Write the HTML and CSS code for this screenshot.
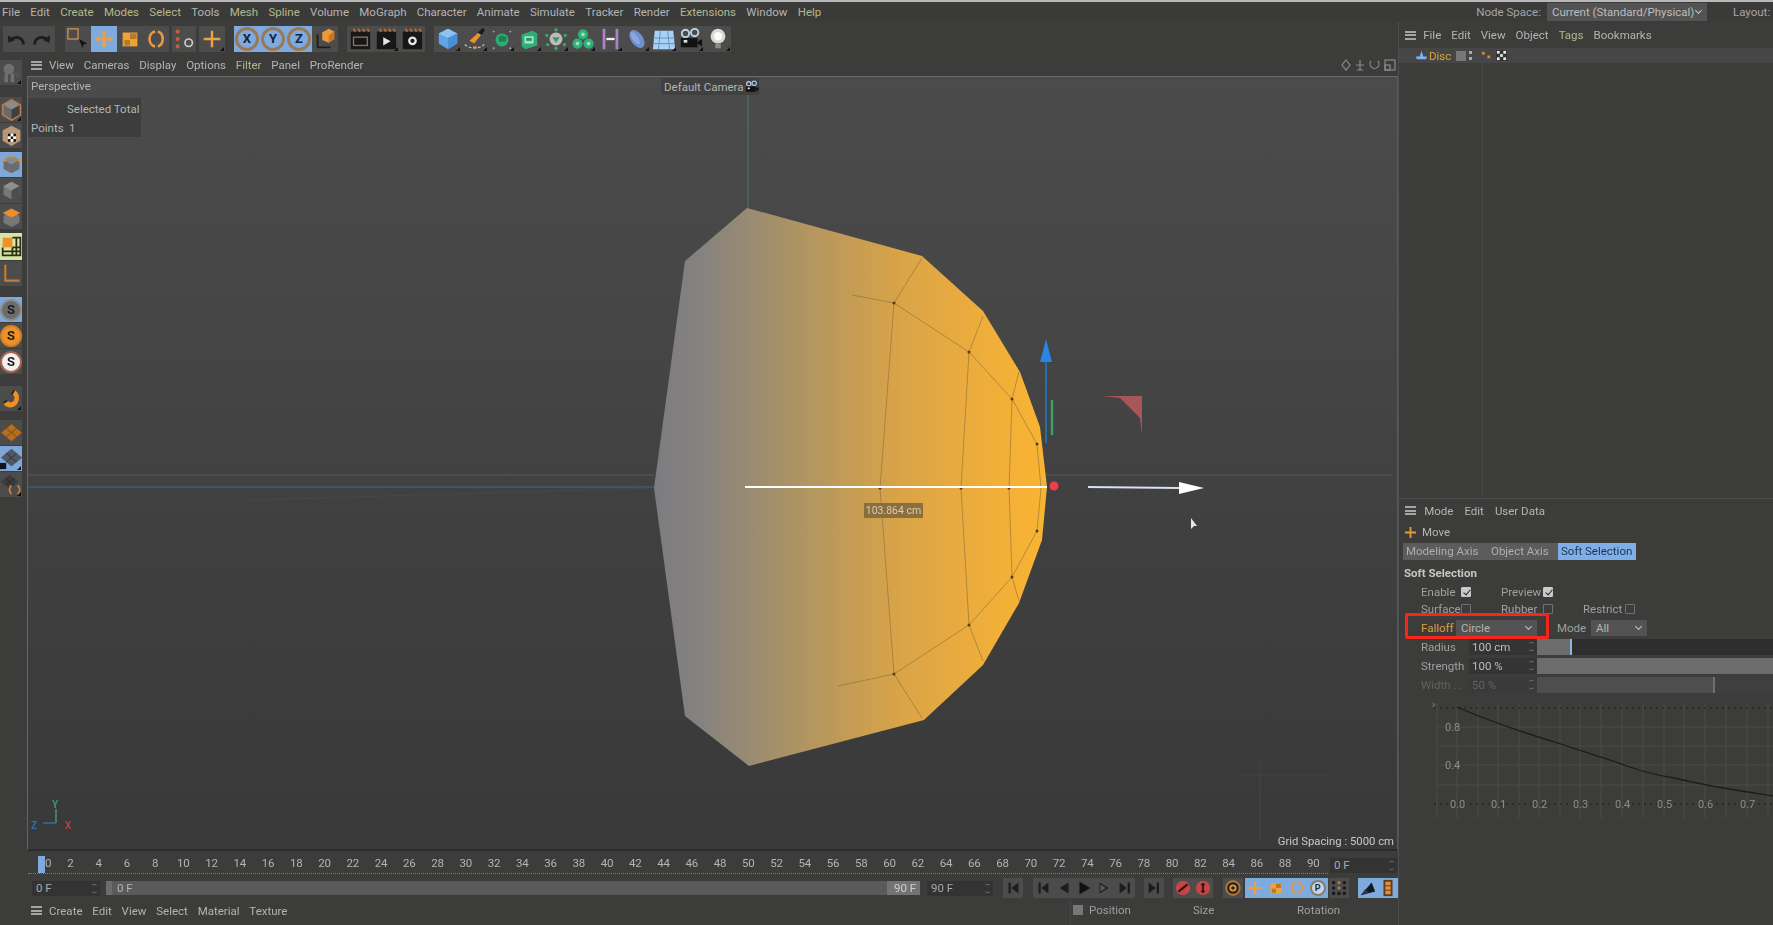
FILE: index.html
```html
<!DOCTYPE html>
<html lang="en">
<head>
<meta charset="utf-8">
<title>Cinema 4D</title>
<link rel="stylesheet" href="styles.css">
</head>
<body>
<svg class="sprite" xmlns="http://www.w3.org/2000/svg">
  <symbol id="i-undo" viewBox="0 0 26 26"><path d="M21 19c0-6-6-10-13-6" fill="none" stroke="#1d1d1d" stroke-width="3"/><path d="M4 9l1 8 7-3z" fill="#1d1d1d"/></symbol>
  <symbol id="i-redo" viewBox="0 0 26 26"><path d="M5 19c0-6 6-10 13-6" fill="none" stroke="#1d1d1d" stroke-width="3"/><path d="M22 9l-1 8-7-3z" fill="#1d1d1d"/></symbol>
  <symbol id="i-rect" viewBox="0 0 26 26"><rect x="2" y="2" width="11" height="11" fill="none" stroke="#c08a4e" stroke-width="1.6"/><path d="M14 13l9 5-4 1-1 4z" fill="#151515"/></symbol>
  <symbol id="i-move" viewBox="0 0 26 26"><path d="M13 3l3.500 4h-2v4.500h4.500v-2l4 3.500-4 3.500v-2h-4.500v4.500h2l-3.500 4-3.500-4h2v-4.500h-4.500v2l-4-3.500 4-3.500v2h4.500v-4.500h-2z" fill="#e8a04c"/></symbol>
  <symbol id="i-scale" viewBox="0 0 26 26"><path d="M5 6h16v15H5z" fill="#f0a232"/><path d="M13 7h7v6h-7zM7 14h6v6H7z" fill="#7d5a2b" opacity=".55"/></symbol>
  <symbol id="i-rot" viewBox="0 0 26 26"><path d="M12 5c-8 1-8 15 0 16M15 5c7 2 7 14 0 16" fill="none" stroke="#e59a42" stroke-width="2.800"/></symbol>
  <symbol id="i-psr" viewBox="0 0 26 26"><circle cx="5" cy="5" r="2.200" fill="#c2603a"/><circle cx="5" cy="13" r="2.200" fill="#c2603a"/><circle cx="5" cy="21" r="2.200" fill="#c2603a"/><circle cx="17" cy="17" r="4" fill="none" stroke="#ccc" stroke-width="1.800"/></symbol>
  <symbol id="i-plus" viewBox="0 0 26 26"><path d="M13 4v18M4 13h18" stroke="#eda343" stroke-width="2.600"/></symbol>
  <symbol id="i-coord" viewBox="0 0 26 26"><path d="M5 8v14h14" fill="none" stroke="#1f1f1f" stroke-width="2"/><path d="M10 6l7-4 6 3v8l-6 4-7-3z" fill="#ee9a38"/><path d="M17 9v8l6-4V5z" fill="#c87825"/></symbol>
  <symbol id="i-film" viewBox="0 0 26 26"><rect x="3" y="5" width="21" height="19" fill="#181716"/><path d="M6 2l2 3M11 2l2 3M16 2l2 3M21 2l2 3" stroke="#b8693c" stroke-width="2"/><rect x="6" y="11" width="15" height="9" fill="none" stroke="#777" stroke-width="1.500"/></symbol>
  <symbol id="i-filmp" viewBox="0 0 26 26"><rect x="3" y="5" width="21" height="19" fill="#181716"/><path d="M6 2l2 3M11 2l2 3M16 2l2 3M21 2l2 3" stroke="#b8693c" stroke-width="2"/><path d="M10 11l8 4.500-8 4.500z" fill="#e6e6e6"/></symbol>
  <symbol id="i-filmg" viewBox="0 0 26 26"><rect x="3" y="5" width="21" height="19" fill="#181716"/><path d="M6 2l2 3M11 2l2 3M16 2l2 3M21 2l2 3" stroke="#b8693c" stroke-width="2"/><circle cx="13.500" cy="15" r="3.500" fill="none" stroke="#e4e4e4" stroke-width="2.500"/></symbol>
  <symbol id="i-cube" viewBox="0 0 26 26"><path d="M13 2l10 5v11l-10 6-10-6V7z" fill="#5da4e8"/><path d="M13 2l10 5-10 5-10-5z" fill="#8cc3f2"/><path d="M13 12v12l10-6V7z" fill="#4b8ed4"/></symbol>
  <symbol id="i-pen" viewBox="0 0 26 26"><path d="M7 15L18 5l2 3-8 10z" fill="#e89230"/><path d="M16 6l5-5 3 2-4 6z" fill="#1b1b1b"/><path d="M2 19c5 5 16 5 21 0" fill="none" stroke="#bdbdbd" stroke-width="1.400" stroke-dasharray="3 2"/><path d="M11 22h4" stroke="#e89230" stroke-width="2"/></symbol>
  <symbol id="i-gem" viewBox="0 0 26 26"><circle cx="13" cy="14" r="7" fill="#2fae74"/><path d="M9 11l4-2 5 2-1 5h-7z" fill="#1c8256"/><g fill="#aab"><circle cx="4" cy="5" r="1"/><circle cx="22" cy="5" r="1"/><circle cx="4" cy="23" r="1"/><circle cx="22" cy="23" r="1"/></g></symbol>
  <symbol id="i-box" viewBox="0 0 26 26"><path d="M5 8l12-4 5 3v13l-13 4-4-3z" fill="#30ad77"/><rect x="8" y="10" width="10" height="8" fill="#9ee3c4"/><rect x="10" y="12" width="6" height="3" fill="#2a8f62"/></symbol>
  <symbol id="i-gear" viewBox="0 0 26 26"><circle cx="13" cy="13" r="7" fill="#bcbcb8"/><path d="M9 11h8l-4 6z" fill="#2f9c6c"/><g fill="#39a878"><circle cx="13" cy="3" r="1.800"/><circle cx="13" cy="23" r="1.800"/><circle cx="3" cy="9" r="1.800"/><circle cx="23" cy="9" r="1.800"/><circle cx="4" cy="19" r="1.800"/><circle cx="22" cy="19" r="1.800"/></g></symbol>
  <symbol id="i-tri" viewBox="0 0 26 26"><circle cx="13" cy="8" r="5.500" fill="#2fb27a"/><circle cx="7" cy="18" r="5.500" fill="#2fb27a"/><circle cx="19" cy="18" r="5.500" fill="#2fb27a"/><g fill="#9be0bf"><circle cx="13" cy="8" r="2"/><circle cx="7" cy="18" r="2"/><circle cx="19" cy="18" r="2"/></g></symbol>
  <symbol id="i-h" viewBox="0 0 26 26"><path d="M5 2h3v22H5zM19 2h3v22h-3z" fill="#a783c9"/><path d="M9 13h9" stroke="#eee" stroke-width="2.500"/></symbol>
  <symbol id="i-disc" viewBox="0 0 26 26"><ellipse cx="13" cy="13" rx="6.500" ry="11" transform="rotate(-35 13 13)" fill="#6f8fce"/><ellipse cx="11" cy="12" rx="3" ry="8" transform="rotate(-35 11 12)" fill="#8aa6de"/></symbol>
  <symbol id="i-floor" viewBox="0 0 26 26"><path d="M3 4h20l2 20H1z" fill="#a9d2f4"/><path d="M1 12h24M1 18h24M9 4L7 24M17 4l2 20" stroke="#5c8fc4" stroke-width="1"/></symbol>
  <symbol id="i-cam" viewBox="0 0 26 26"><circle cx="7" cy="7" r="4" fill="none" stroke="#bcd5ec" stroke-width="2"/><circle cx="17" cy="6" r="4" fill="none" stroke="#bcd5ec" stroke-width="2"/><rect x="2" y="12" width="18" height="10" fill="#121212"/><path d="M20 16l5-3v8l-5-3z" fill="#121212"/><rect x="5" y="14" width="4" height="3" fill="#ddd"/></symbol>
  <symbol id="i-bulb" viewBox="0 0 26 26"><circle cx="13" cy="10" r="8" fill="#d9d9d4"/><circle cx="13" cy="10" r="4.500" fill="#fbfbf7"/><rect x="10" y="18" width="6" height="5" fill="#8c8c8c"/></symbol>
  <symbol id="i-cubepts" viewBox="0 0 26 26"><path d="M13 3l9 5v10l-9 5-9-5V8z" fill="#6c6c6c"/><path d="M13 3l9 5-9 5-9-5z" fill="#8a8a8a"/><circle cx="13" cy="4" r="2" fill="#e58a2e"/><circle cx="22" cy="8" r="2" fill="#e58a2e"/><circle cx="5" cy="8" r="2" fill="#e58a2e"/></symbol>
  <symbol id="i-cubeg" viewBox="0 0 26 26"><path d="M13 3l9 5v10l-9 5-9-5V8z" fill="#777"/><path d="M13 3l9 5-9 5-9-5z" fill="#8f8f8f"/><path d="M13 13v10l9-5V8z" fill="#4d4d4d"/></symbol>
  <symbol id="i-cubeo" viewBox="0 0 26 26"><path d="M13 8l9 4v8l-9 5-9-5v-8z" fill="#777"/><path d="M13 4l10 5-10 5L3 9z" fill="#ec8e2a"/></symbol>
  <symbol id="i-hex" viewBox="0 0 26 26"><path d="M13 2l10 6v11l-10 6-10-6V8z" fill="#6a6a6a" stroke="#b5794a" stroke-width="2"/><path d="M13 13v11l9-5V8z" fill="#3f3f3f"/><path d="M13 3l9 5-9 5-9-5z" fill="#8b8b8b"/></symbol>
  <symbol id="i-check" viewBox="0 0 26 26"><path d="M13 2l10 5v12l-10 6-10-6V7z" fill="#b89878"/><g fill="#111"><rect x="9" y="11" width="3" height="3"/><rect x="15" y="11" width="3" height="3"/><rect x="12" y="14" width="3" height="3"/><rect x="9" y="17" width="3" height="3"/><rect x="15" y="17" width="3" height="3"/></g><g fill="#fff"><rect x="12" y="11" width="3" height="3"/><rect x="9" y="14" width="3" height="3"/><rect x="15" y="14" width="3" height="3"/><rect x="12" y="17" width="3" height="3"/></g></symbol>
  <symbol id="i-statue" viewBox="0 0 26 26"><circle cx="10" cy="9" r="6" fill="#7b7b7b"/><rect x="5" y="14" width="4" height="10" fill="#7b7b7b"/><rect x="12" y="14" width="4" height="10" fill="#7b7b7b"/><path d="M16 12l6 3-3 5z" fill="#6e5050"/></symbol>
  <symbol id="i-grid4" viewBox="0 0 26 26"><rect x="1" y="1" width="24" height="24" fill="#d9e3a6"/><rect x="3" y="3" width="11" height="11" fill="#ee9226"/><path d="M14 3h9v20H3v-9M18.500 3v20M3 18.500h20M14 14v9M14 14h9" fill="none" stroke="#2a3016" stroke-width="2"/></symbol>
  <symbol id="i-axis" viewBox="0 0 26 26"><path d="M6 3v18h16" fill="none" stroke="#c77a33" stroke-width="2.400"/></symbol>
  <symbol id="i-magnet" viewBox="0 0 26 26"><path d="M15 3c8 2 9 14 1 19-6 3-11 0-13-5l5-3c2 4 5 4 7 2 3-3 1-8-3-8z" fill="#ee9025"/><path d="M3 17l5-3 1 2-5 3z" fill="#1f1f1f"/><path d="M15 3l-3 5 2 1 3-5z" fill="#1f1f1f"/></symbol>
  <symbol id="i-plane" viewBox="0 0 26 26"><path d="M13 3l12 10-12 10L1 13z" fill="#b36f1f"/><path d="M7 8l12 10M13 3l12 10M19 8L7 18M1 13L13 3" stroke="#6d4518" stroke-width="1"/></symbol>
  <symbol id="i-planeb" viewBox="0 0 26 26"><path d="M13 2l12 10-12 10L1 12z" fill="#505862"/><path d="M7 7l12 10M19 7L7 17" stroke="#2b3037" stroke-width="1"/><rect x="0" y="18" width="7" height="7" fill="#12161c"/></symbol>
  <symbol id="i-planebr" viewBox="0 0 26 26"><path d="M11 2l10 8-10 8L1 10z" fill="#3b3b3b"/><path d="M6 6l10 8M16 6L6 14" stroke="#262626" stroke-width="1"/><path d="M13 14c-3 3-3 7 0 10M20 14c3 3 3 7 0 10" fill="none" stroke="#d4832e" stroke-width="2"/></symbol>
  <symbol id="i-first" viewBox="0 0 20 20"><path d="M5 4h2.500v12H5zM16 4v12L8 10z" fill="#1d1d1d"/></symbol>
  <symbol id="i-prev" viewBox="0 0 20 20"><path d="M15 4v12L5 10z" fill="#1d1d1d"/></symbol>
  <symbol id="i-play" viewBox="0 0 20 20"><path d="M5 3l12 7-12 7z" fill="#111"/></symbol>
  <symbol id="i-next" viewBox="0 0 20 20"><path d="M5 4v12l10-6z" fill="#1d1d1d"/><path d="M6 6l6 4-6 4z" fill="#5a5a5a"/></symbol>
  <symbol id="i-last" viewBox="0 0 20 20"><path d="M13 4h2.500v12H13zM4 4v12l8-6z" fill="#1d1d1d"/></symbol>
  <symbol id="i-rec" viewBox="0 0 20 20"><circle cx="10" cy="10" r="8" fill="#c94545"/><path d="M5 14L15 6" stroke="#2a1616" stroke-width="2.500"/></symbol>
  <symbol id="i-rec2" viewBox="0 0 20 20"><circle cx="10" cy="10" r="8" fill="#c94545"/><path d="M10 4l3 3h-6zM10 16l3-3H7z" fill="#2a1616"/><rect x="9" y="6" width="2" height="8" fill="#2a1616"/></symbol>
  <symbol id="i-orec" viewBox="0 0 20 20"><circle cx="10" cy="10" r="7.500" fill="#222" stroke="#b5783a" stroke-width="2"/><circle cx="10" cy="10" r="3" fill="none" stroke="#e59a36" stroke-width="2"/></symbol>
  <symbol id="i-dots" viewBox="0 0 20 20"><g fill="#1c1c1c"><circle cx="4" cy="4" r="2"/><circle cx="16" cy="4" r="2"/><circle cx="4" cy="16" r="2"/><circle cx="10" cy="16" r="2"/><circle cx="16" cy="16" r="2"/><circle cx="4" cy="10" r="2"/><circle cx="16" cy="10" r="2"/></g><g fill="#c2813a"><circle cx="10" cy="4" r="1.600"/><circle cx="10" cy="10" r="1.600"/></g></symbol>
  <symbol id="i-speaker" viewBox="0 0 20 20"><path d="M2 18L14 4l4 10z" fill="#141a22"/><path d="M2 18l5-7 4 4z" fill="#2c3a4c"/></symbol>
  <symbol id="i-film2" viewBox="0 0 20 20"><rect x="5" y="1" width="10" height="18" fill="#5c3a1e"/><rect x="7" y="3" width="6" height="4" fill="#e08e36"/><rect x="7" y="8" width="6" height="4" fill="#e08e36"/><rect x="7" y="13" width="6" height="4" fill="#e08e36"/></symbol>
</svg>

<div class="app">
  <header class="menubar">
    <nav class="menu">
      <span>File</span><span>Edit</span><span class="hi">Create</span><span class="hi">Modes</span><span class="hi">Select</span><span>Tools</span><span class="hi">Mesh</span><span class="hi">Spline</span><span>Volume</span><span>MoGraph</span><span>Character</span><span>Animate</span><span>Simulate</span><span>Tracker</span><span>Render</span><span class="hi">Extensions</span><span>Window</span><span class="hi">Help</span>
    </nav>
    <div class="nodespace">
      <span class="ns-label">Node Space:</span>
      <span class="ns-select">Current (Standard/Physical)<i class="chev"></i></span>
      <span class="layout-label">Layout:</span>
    </div>
  </header>

  <div class="main">
    <section class="left">
      <div class="toolbar">
        <div class="tgroup g-undo">
          <span class="tb"><svg><use href="#i-undo"/></svg></span>
          <span class="tb"><svg><use href="#i-redo"/></svg></span>
        </div>
        <div class="tgroup g-tools">
          <span class="tb"><svg><use href="#i-rect"/></svg></span>
          <span class="tb on"><svg><use href="#i-move"/></svg></span>
          <span class="tb"><svg><use href="#i-scale"/></svg></span>
          <span class="tb"><svg><use href="#i-rot"/></svg></span>
        </div>
        <div class="tgroup g-psr"><span class="tb"><svg><use href="#i-psr"/></svg></span></div>
        <div class="tgroup g-plus"><span class="tb mark"><svg><use href="#i-plus"/></svg></span></div>
        <div class="tgroup g-xyz">
          <span class="tb on axis"><b>X</b></span>
          <span class="tb on axis"><b>Y</b></span>
          <span class="tb on axis"><b>Z</b></span>
          <span class="tb"><svg><use href="#i-coord"/></svg></span>
        </div>
        <div class="tgroup g-film">
          <span class="tb"><svg><use href="#i-film"/></svg></span>
          <span class="tb mark"><svg><use href="#i-filmp"/></svg></span>
          <span class="tb"><svg><use href="#i-filmg"/></svg></span>
        </div>
        <div class="tgroup g-obj">
          <span class="tb mark"><svg><use href="#i-cube"/></svg></span>
          <span class="tb mark"><svg><use href="#i-pen"/></svg></span>
          <span class="tb mark"><svg><use href="#i-gem"/></svg></span>
          <span class="tb mark"><svg><use href="#i-box"/></svg></span>
          <span class="tb mark"><svg><use href="#i-gear"/></svg></span>
          <span class="tb mark"><svg><use href="#i-tri"/></svg></span>
          <span class="tb mark"><svg><use href="#i-h"/></svg></span>
          <span class="tb mark"><svg><use href="#i-disc"/></svg></span>
          <span class="tb mark"><svg><use href="#i-floor"/></svg></span>
          <span class="tb mark"><svg><use href="#i-cam"/></svg></span>
          <span class="tb mark"><svg><use href="#i-bulb"/></svg></span>
        </div>
      </div>

      <div class="workarea">
        <aside class="side">
          <div class="sgroup sg1"><span class="sb dim mark"><svg><use href="#i-statue"/></svg></span></div>
          <div class="sgroup sg2">
            <span class="sb mark"><svg><use href="#i-hex"/></svg></span>
            <span class="sb"><svg><use href="#i-check"/></svg></span>
          </div>
          <div class="sgroup sg3">
            <span class="sb on"><svg><use href="#i-cubepts"/></svg></span>
            <span class="sb"><svg><use href="#i-cubeg"/></svg></span>
            <span class="sb"><svg><use href="#i-cubeo"/></svg></span>
          </div>
          <div class="sgroup sg4">
            <span class="sb tall sel"><svg><use href="#i-grid4"/></svg></span>
            <span class="sb"><svg><use href="#i-axis"/></svg></span>
          </div>
          <div class="sgroup sg5">
            <span class="sb on s-btn s-gray"><b>S</b></span>
            <span class="sb s-btn s-orange"><b>S</b></span>
            <span class="sb s-btn s-white"><b>S</b></span>
          </div>
          <div class="sgroup sg6"><span class="sb mark"><svg><use href="#i-magnet"/></svg></span></div>
          <div class="sgroup sg7">
            <span class="sb"><svg><use href="#i-plane"/></svg></span>
            <span class="sb on mark"><svg><use href="#i-planeb"/></svg></span>
            <span class="sb mark"><svg><use href="#i-planebr"/></svg></span>
          </div>
        </aside>

        <div class="viewcol">
          <nav class="viewmenu">
            <i class="burger"></i>
            <span>View</span><span>Cameras</span><span>Display</span><span>Options</span><span class="hi">Filter</span><span>Panel</span><span>ProRender</span>
            <svg class="viewnav" viewBox="0 0 56 14"><g fill="none" stroke="#8a8a8a" stroke-width="1.200"><path d="M6 2l4 5-4 5-4-5z"/><path d="M20 2v10M16 7h8M17 12h6"/><path d="M31 3a4.500 4.500 0 1 0 7 0"/><rect x="45" y="2" width="10" height="10"/><rect x="45" y="7" width="5" height="5"/></g></svg>
          </nav>
          <div class="viewport">
            <svg class="scene" viewBox="27 76 1371 775" xmlns="http://www.w3.org/2000/svg">
              <defs>
                <linearGradient id="shade" gradientUnits="userSpaceOnUse" x1="654" y1="0" x2="1045" y2="0">
                  <stop offset="0" stop-color="#7c7c80"/>
                  <stop offset=".12" stop-color="#86827f"/>
                  <stop offset=".4" stop-color="#b39660"/>
                  <stop offset=".62" stop-color="#d8a348"/>
                  <stop offset=".85" stop-color="#efae3a"/>
                  <stop offset="1" stop-color="#f8b432"/>
                </linearGradient>
              </defs>
              <path d="M27 475H654M1046 475H1392" stroke="#5b5a54" stroke-width="1"/>
              <path d="M27 487H654" stroke="#3a6a90" stroke-width="1.200"/>
              <path d="M250 500L654 488" stroke="#46494a" stroke-width="1"/>
              <path d="M748 95V208" stroke="#3c7a64" stroke-width="1.200"/>
              <path d="M1260 760V840M1240 775H1330" stroke="#444" stroke-width="1"/>
              <polygon points="747,208 922,256 983,311 1020,372 1040,427 1047,487 1042,540 1019,603 983,665 924,720 749,766 685,716 654,488 685,261" fill="url(#shade)"/>
              <g fill="none" stroke="#8d6d3a" stroke-width="1" opacity=".6">
                <path d="M852 295L894 303L969 352L1012 399L1037 444"/>
                <path d="M838 686L894 674L969 625L1012 577L1037 531"/>
                <path d="M922 258L894 303L880 488L894 674L922 718"/>
                <path d="M983 316L969 352L961 488L969 625L983 661"/>
                <path d="M1019 372L1012 399L1009 488L1012 577L1019 601"/>
                <path d="M1037 444L1041 488L1037 531"/>
              </g>
              <g fill="#5b3a18">
                <circle cx="894" cy="303" r="1.500"/><circle cx="969" cy="352" r="1.500"/><circle cx="1012" cy="399" r="1.500"/><circle cx="1037" cy="444" r="1.500"/><circle cx="880" cy="488" r="1.500"/><circle cx="961" cy="488" r="1.500"/><circle cx="1009" cy="488" r="1.500"/><circle cx="1037" cy="531" r="1.500"/><circle cx="1012" cy="577" r="1.500"/><circle cx="969" cy="625" r="1.500"/><circle cx="894" cy="674" r="1.500"/>
              </g>
              <path d="M745 487H1047" stroke="#fff" stroke-width="2"/>
              <circle cx="1054" cy="486" r="4.500" fill="#ee3f46"/>
              <path d="M1088 487L1179 488" stroke="#d7e2ee" stroke-width="2"/>
              <polygon points="1179,482 1204,488 1179,494" fill="#fff"/>
              <path d="M1046 360V443" stroke="#2a6ba8" stroke-width="2"/>
              <polygon points="1046,339 1052,362 1040,362" fill="#2a86e0"/>
              <path d="M1052 400V435" stroke="#3e9e6e" stroke-width="2.500"/>
              <polygon points="1102,396 1142,396 1142,435 1140,418 1120,398" fill="#a8565a"/>
              <polygon points="1191,518 1191,529 1194,526 1197,526" fill="#e6e6e6"/>
            </svg>

            <span class="vp-perspective">Perspective</span>
            <div class="vp-hud">
              <div class="hud-row hud-head">Selected Total</div>
              <div class="hud-row"><span class="hud-key">Points</span><span>1</span></div>
            </div>
            <div class="vp-camera">Default Camera<svg viewBox="0 0 26 26"><use href="#i-cam"/></svg></div>
            <span class="vp-measure">103.864 cm</span>
            <span class="vp-grid">Grid Spacing : 5000 cm</span>
            <svg class="vp-axes" viewBox="0 0 50 34" xmlns="http://www.w3.org/2000/svg">
              <path d="M25 10V24" stroke="#3a9a70" stroke-width="1.500"/>
              <path d="M12 24H25" stroke="#2f6fb0" stroke-width="1.500"/>
              <text x="21" y="9" class="ax-y">Y</text>
              <text x="0" y="30" class="ax-z">Z</text>
              <text x="34" y="30" class="ax-x">X</text>
            </svg>
          </div>
        </div>
      </div>

      <div class="timeline">
        <div class="ruler">
          <span class="handle"></span>
          <span>0</span><span>2</span><span>4</span><span>6</span><span>8</span><span>10</span><span>12</span><span>14</span><span>16</span><span>18</span><span>20</span><span>22</span><span>24</span><span>26</span><span>28</span><span>30</span><span>32</span><span>34</span><span>36</span><span>38</span><span>40</span><span>42</span><span>44</span><span>46</span><span>48</span><span>50</span><span>52</span><span>54</span><span>56</span><span>58</span><span>60</span><span>62</span><span>64</span><span>66</span><span>68</span><span>70</span><span>72</span><span>74</span><span>76</span><span>78</span><span>80</span><span>82</span><span>84</span><span>86</span><span>88</span><span>90</span>
        </div>
        <div class="field f-now">0 F<i class="spin"></i></div>
      </div>

      <div class="transport">
        <div class="field f-start">0 F<i class="spin"></i></div>
        <div class="range"><span class="range-grip"></span><span>0 F</span><span class="range-end">90 F</span></div>
        <div class="field f-end">90 F<i class="spin"></i></div>
        <div class="pgroup pg-a"><span class="pb"><svg><use href="#i-first"/></svg></span></div>
        <div class="pgroup pg-b">
          <span class="pb"><svg><use href="#i-first"/></svg></span>
          <span class="pb"><svg><use href="#i-prev"/></svg></span>
          <span class="pb"><svg><use href="#i-play"/></svg></span>
          <span class="pb"><svg><use href="#i-next"/></svg></span>
          <span class="pb"><svg><use href="#i-last"/></svg></span>
        </div>
        <div class="pgroup pg-c"><span class="pb"><svg><use href="#i-last"/></svg></span></div>
        <div class="pgroup pg-d">
          <span class="pb"><svg><use href="#i-rec"/></svg></span>
          <span class="pb"><svg><use href="#i-rec2"/></svg></span>
        </div>
        <div class="pgroup pg-e"><span class="pb"><svg><use href="#i-orec"/></svg></span></div>
        <div class="pgroup pg-f">
          <span class="pb on"><svg viewBox="0 0 26 26"><use href="#i-move"/></svg></span>
          <span class="pb on"><svg viewBox="0 0 26 26"><use href="#i-scale"/></svg></span>
          <span class="pb on"><svg viewBox="0 0 26 26"><use href="#i-rot"/></svg></span>
          <span class="pb on pla"><b>P</b></span>
        </div>
        <div class="pgroup pg-g"><span class="pb"><svg><use href="#i-dots"/></svg></span></div>
        <div class="pgroup pg-h">
          <span class="pb on"><svg><use href="#i-speaker"/></svg></span>
          <span class="pb on"><svg><use href="#i-film2"/></svg></span>
        </div>
      </div>

      <div class="bottom">
        <nav class="bottom-menu">
          <i class="burger"></i>
          <span>Create</span><span>Edit</span><span>View</span><span>Select</span><span>Material</span><span>Texture</span>
        </nav>
        <div class="coords">
          <i class="coords-box"></i>
          <span class="c-pos">Position</span><span class="c-size">Size</span><span class="c-rot">Rotation</span>
        </div>
      </div>
    </section>

    <section class="right">
      <div class="objects">
        <nav class="panel-menu om-menu">
          <i class="burger"></i>
          <span>File</span><span>Edit</span><span>View</span><span>Object</span><span class="hi">Tags</span><span>Bookmarks</span>
        </nav>
        <div class="disc-row">
          <svg class="disc-icon" viewBox="0 0 14 14"><path d="M7 2l2 6h4l-1 3H2L1 8h4z" fill="#7fb4e8"/></svg>
          <span class="disc-name">Disc</span>
          <i class="disc-box"></i>
          <i class="disc-dots"></i>
          <svg class="disc-tag" viewBox="0 0 12 12"><g fill="#d08a38"><rect x="1" y="2" width="3" height="3"/><rect x="7" y="6" width="3" height="3"/></g></svg>
          <svg class="disc-tag" viewBox="0 0 12 12"><rect width="12" height="12" fill="#333"/><g fill="#e8e8e8"><rect x="1" y="1" width="3" height="3"/><rect x="8" y="1" width="3" height="3"/><rect x="4.500" y="4.500" width="3" height="3"/><rect x="1" y="8" width="3" height="3"/><rect x="8" y="8" width="3" height="3"/></g></svg>
        </div>
        <div class="om-cols"><div class="om-col"></div></div>
      </div>

      <div class="attrs">
        <nav class="panel-menu am-menu">
          <i class="burger"></i>
          <span>Mode</span><span>Edit</span><span>User Data</span>
        </nav>
        <div class="move-row">
          <svg class="move-icon" viewBox="0 0 12 12"><path d="M6 0v12M0 6h12" stroke="#e59a36" stroke-width="2"/></svg>
          <span>Move</span>
        </div>
        <div class="tabs">
          <span class="tab t1">Modeling Axis</span><span class="tab t2">Object Axis</span><span class="tab tab-on">Soft Selection</span>
        </div>
        <div class="section-title">Soft Selection</div>

        <div class="row r-enable">
          <span class="lbl l-enable">Enable</span><i class="cb on"></i>
          <span class="lbl l-preview">Preview</span><i class="cb on"></i>
        </div>
        <div class="row r-surface">
          <span class="lbl l-enable">Surface</span><i class="cb"></i>
          <span class="lbl l-preview">Rubber</span><i class="cb"></i>
          <span class="lbl l-restrict">Restrict</span><i class="cb"></i>
        </div>
        <div class="row r-falloff">
          <span class="lbl l-falloff">Falloff</span>
          <span class="dd dd-falloff">Circle<i class="chev"></i></span>
          <span class="lbl l-mode">Mode</span>
          <span class="dd dd-mode">All<i class="chev"></i></span>
          <span class="redbox"></span>
        </div>

        <div class="slider-row">
          <span class="lbl l-num">Radius</span>
          <span class="num">100 cm<i class="spin"></i></span>
          <span class="track"><span class="fill fill-radius"></span></span>
        </div>
        <div class="slider-row">
          <span class="lbl l-num">Strength</span>
          <span class="num">100 %<i class="spin"></i></span>
          <span class="track"><span class="fill fill-strength"></span></span>
        </div>
        <div class="slider-row dimmed">
          <span class="lbl l-num">Width . .</span>
          <span class="num">50 %<i class="spin"></i></span>
          <span class="track"><span class="fill fill-width"></span></span>
        </div>

        <svg class="graph" viewBox="1398 696 375 130" xmlns="http://www.w3.org/2000/svg">
          <g stroke="#4a4a4a" stroke-width="1">
            <path d="M1437 727H1773M1437 746H1773M1437 765H1773M1437 785H1773"/>
            <path d="M1436 703V818M1456 703V818M1477 703V818M1497 703V818M1518 703V818M1538 703V818M1559 703V818M1579 703V818M1600 703V818M1621 703V818M1642 703V818M1663 703V818M1683 703V818M1704 703V818M1725 703V818M1746 703V818M1767 703V818"/>
          </g>
          <path d="M1433 708H1773M1433 804H1773" stroke="#1f1f1f" stroke-width="1" stroke-dasharray="2 4"/>
          <path d="M1456 707C1490 722 1530 735 1563 745C1590 754 1610 760 1623 765C1645 773 1660 776 1673 778C1695 783 1710 786 1723 788C1745 792 1760 794 1773 796" fill="none" stroke="#1c1c1c" stroke-width="1.300"/>
          <g class="graph-labels">
            <text x="1431" y="708" class="gl-small">›</text>
            <text x="1444" y="731">0.8</text>
            <text x="1444" y="769">0.4</text>
            <text x="1449" y="808">0.0</text>
            <text x="1490" y="808">0.1</text>
            <text x="1531" y="808">0.2</text>
            <text x="1572" y="808">0.3</text>
            <text x="1614" y="808">0.4</text>
            <text x="1656" y="808">0.5</text>
            <text x="1697" y="808">0.6</text>
            <text x="1739" y="808">0.7</text>
          </g>
        </svg>
      </div>
    </section>
  </div>
</div>
</body>
</html>
```

FILE: styles.css
```css
* { box-sizing: border-box; }
html, body { margin: 0; padding: 0; }
body {
  width: 1773px;
  height: 925px;
  overflow: hidden;
  background: #3c3c3b;
  color: #b4b4b4;
  font-family: Roboto, "Noto Sans", sans-serif;
  font-size: 11.500px;
  line-height: 16px;
  white-space: nowrap;
}
.sprite { display: none; }
.app {
  width: 1773px;
  height: 925px;
  display: flex;
  flex-direction: column;
  border-top: 2px solid #b9b9b9;
  filter: blur(.45px);
}
.hi { color: #b5b98a; }
i { display: block; font-style: normal; }

/* top menu */
.menubar {
  height: 20px;
  flex: none;
  display: flex;
  align-items: center;
  justify-content: space-between;
  background: #3a3a39;
}
.menu { display: flex; gap: 10.300px; padding-left: 2px; }
.nodespace { display: flex; align-items: center; }
.ns-label { margin-right: 6px; color: #a4a4a4; }
.ns-select {
  width: 160px;
  height: 18px;
  padding-left: 5px;
  background: #535353;
  color: #bdbdbd;
  display: flex;
  align-items: center;
  position: relative;
}
.chev {
  position: absolute;
  right: 6px;
  top: 50%;
  width: 5px;
  height: 5px;
  margin-top: -4px;
  border-right: 1.500px solid #c6c6c6;
  border-bottom: 1.500px solid #c6c6c6;
  transform: rotate(45deg);
}
.layout-label { margin: 0 8px 0 26px; width: 32px; color: #a4a4a4; }

.main {
  flex: 1;
  min-height: 0;
  display: grid;
  grid-template-columns: 1398px 375px;
  grid-template-rows: minmax(0, 1fr);
}
.left { display: flex; flex-direction: column; min-height: 0; }
.right { display: flex; flex-direction: column; min-height: 0; border-left: 1px solid #4f4f4f; }

/* main toolbar */
.toolbar {
  height: 32px;
  flex: none;
  display: flex;
  padding-top: 4px;
  padding-left: 3px;
}
.tgroup { display: flex; height: 26px; background: #4c4c4c; }
.tb {
  width: 26px;
  height: 26px;
  flex: none;
  position: relative;
  display: flex;
  align-items: center;
  justify-content: center;
}
.tb svg { width: 24px; height: 24px; display: block; }
.tb.on { background: #7eaadf; }
.g-tools { margin-left: 10px; }
.g-psr { margin-left: 3px; width: 24px; }
.g-plus { margin-left: 3px; }
.g-xyz { margin-left: 9px; }
.g-film { margin-left: 9px; }
.g-obj { margin-left: 9px; }
.g-obj .tb { width: 27px; }
.mark::after {
  content: "";
  position: absolute;
  right: 1px;
  bottom: 1px;
  border-left: 4px solid transparent;
  border-bottom: 4px solid #111;
}
.axis b {
  width: 24px;
  height: 24px;
  border: 3.500px solid #9a7a56;
  border-radius: 50%;
  color: #14233a;
  font: 700 13px/17px Roboto, sans-serif;
  text-align: center;
}

/* work area */
.workarea { flex: 1; min-height: 0; display: flex; }
.side {
  width: 27px;
  flex: none;
  padding-top: 6px;
  display: flex;
  flex-direction: column;
}
.sgroup { display: flex; flex-direction: column; gap: 1px; width: 22px; }
.sg2 { margin-top: 12px; }
.sg3 { margin-top: 4px; }
.sg4 { margin-top: 4px; }
.sg5 { margin-top: 11px; }
.sg6 { margin-top: 12px; }
.sg7 { margin-top: 9px; }
.sb {
  height: 25px;
  background: #4c4c4c;
  position: relative;
  display: flex;
  align-items: center;
  justify-content: center;
  overflow: hidden;
}
.sb svg { width: 23px; height: 23px; display: block; flex: none; }
.sb.on { background: #7ea8da; }
.sb.tall { height: 27px; }
.sb.sel { background: #d9e3a6; }
.sb.dim svg { opacity: .75; }
.s-btn b {
  width: 22px;
  height: 22px;
  border-radius: 50%;
  font: 700 13px/18px Roboto, sans-serif;
  text-align: center;
  color: #1c1c1c;
  border: 2px solid;
  flex: none;
}
.s-gray b { background: #6c6c6c; border-color: #8d8d8d; }
.s-orange b { background: #ed9228; border-color: #d58024; }
.s-white b { background: #f1f1f1; border-color: #a8664a; }

.viewcol { flex: 1; min-width: 0; display: flex; flex-direction: column; }
.viewmenu {
  height: 22px;
  flex: none;
  display: flex;
  align-items: center;
  padding-left: 4px;
  gap: 9.800px;
  position: relative;
}
.burger {
  width: 11px;
  height: 9px;
  flex: none;
  margin-right: -2.800px;
  border-top: 2px solid #a5a5a5;
  border-bottom: 2px solid #a5a5a5;
  position: relative;
}
.burger::after {
  content: "";
  position: absolute;
  left: 0;
  right: 0;
  top: 1.500px;
  height: 2px;
  background: #a5a5a5;
}
.viewnav { width: 56px; height: 14px; margin-left: auto; margin-right: 2px; }

.viewport {
  flex: 1;
  min-height: 0;
  position: relative;
  overflow: hidden;
  border-top: 1px solid #6a6a6a;
  border-left: 1px solid #656565;
  border-right: 1px solid #5a5a5a;
  border-bottom: 2px solid #2b2b2b;
  background: linear-gradient(180deg, #4b4b4b 0%, #454545 35%, #3f3f3f 62%, #393939 100%);
}
.scene { position: absolute; left: -1px; top: -1px; width: 1371px; height: 775px; }
.vp-perspective {
  position: absolute;
  left: 0;
  top: 2px;
  width: 61px;
  height: 15px;
  padding-left: 3px;
  background: #484848;
  line-height: 15px;
}
.vp-hud {
  position: absolute;
  left: 0;
  top: 21px;
  width: 113px;
  height: 39px;
  padding-left: 3px;
  padding-top: 2px;
  background: #3d3d3d;
}
.hud-row { height: 19px; line-height: 19px; display: flex; }
.hud-head { padding-left: 36px; }
.hud-key { width: 38px; }
.vp-camera {
  position: absolute;
  left: 633px;
  top: 1px;
  height: 17px;
  padding: 0 0 0 3px;
  background: #404040;
  display: flex;
  align-items: center;
}
.vp-camera svg { width: 14px; height: 14px; margin-left: 1px; }
.vp-measure {
  position: absolute;
  left: 836px;
  top: 426px;
  width: 59px;
  height: 15px;
  background: rgba(132, 104, 60, .9);
  color: #d7cdb8;
  font-size: 10.500px;
  line-height: 15px;
  text-align: center;
}
.vp-grid {
  position: absolute;
  right: 3px;
  bottom: -1px;
  color: #c9c9c9;
  font-size: 11.300px;
}
.vp-axes {
  position: absolute;
  left: 3px;
  bottom: 16px;
  width: 50px;
  height: 34px;
}
.vp-axes text { font: 700 10px Roboto, sans-serif; }
.ax-y { fill: #3a9a70; }
.ax-z { fill: #2f6fb0; }
.ax-x { fill: #b84040; }

/* timeline */
.timeline {
  height: 26px;
  flex: none;
  display: flex;
  align-items: flex-start;
  padding-top: 5px;
}
.ruler {
  width: 1300px;
  margin-left: 28px;
  height: 18px;
  display: grid;
  grid-template-columns: repeat(46, 28.260px);
  position: relative;
  text-align: center;
  line-height: 14px;
  border-bottom: 1px dotted #7d7d7d;
}
.ruler span:nth-child(2) { padding-left: 12px; }
.handle {
  position: absolute;
  left: 10px;
  top: 0;
  width: 7px;
  height: 17px;
  background: #7eaadf;
}
.field {
  background: #333;
  height: 15px;
  line-height: 15px;
  padding-left: 4px;
  color: #aaa;
  position: relative;
  flex: none;
}
.spin {
  position: absolute;
  right: 3px;
  top: 50%;
  width: 5px;
  height: 9px;
  margin-top: -4.500px;
  border-top: 1px solid #6d6d6d;
  border-bottom: 1px solid #6d6d6d;
  border-radius: 2px;
}
.f-now { width: 67px; margin-left: 2px; margin-top: 2px; }

.transport {
  height: 22px;
  flex: none;
  display: flex;
  align-items: center;
  padding-left: 32px;
}
.f-start { width: 68px; }
.range {
  width: 814px;
  height: 14px;
  margin-left: 6px;
  padding-left: 11px;
  background: #5a5a5a;
  color: #b5b5b5;
  line-height: 14px;
  display: flex;
  position: relative;
  flex: none;
}
.range-grip {
  position: absolute;
  left: 0;
  top: 0;
  bottom: 0;
  width: 6px;
  background: #6d6d6d;
}
.range-end {
  margin-left: auto;
  width: 33px;
  padding-left: 7px;
  background: #737373;
  color: #cfcfcf;
}
.f-end { width: 66px; margin-left: 7px; }
.pgroup { display: flex; height: 20px; background: #4c4c4c; flex: none; }
.pb {
  width: 20px;
  height: 20px;
  display: flex;
  align-items: center;
  justify-content: center;
  flex: none;
}
.pb svg { width: 18px; height: 18px; display: block; }
.pb.on { background: #7eaadf; }
.pg-a { margin-left: 10px; }
.pg-b { margin-left: 10px; }
.pg-b .pb { width: 20.400px; }
.pg-c { margin-left: 9px; }
.pg-d { margin-left: 9px; }
.pg-e { margin-left: 10px; }
.pg-f { margin-left: 2px; }
.pg-f .pb { width: 20.750px; }
.pla b {
  width: 16px;
  height: 16px;
  border-radius: 50%;
  border: 2px solid #8b7a66;
  background: #c4d4ea;
  color: #1a2a4a;
  font: 700 9px/12px Roboto, sans-serif;
  text-align: center;
}
.pg-g { margin-left: 1px; }
.pg-h { margin-left: 9px; }

.bottom { height: 26px; flex: none; display: flex; }
.bottom-menu {
  width: 1070px;
  flex: none;
  display: flex;
  align-items: center;
  gap: 9.800px;
  padding-left: 31px;
  padding-bottom: 3px;
}
.coords {
  flex: 1;
  display: flex;
  align-items: center;
  padding-bottom: 5px;
  border-left: 1px solid #474747;
  color: #9f9f9f;
}
.coords-box { width: 10px; height: 10px; margin-left: 2px; background: #777; }
.c-pos { margin-left: 6px; width: 104px; }
.c-size { width: 104px; }

/* object manager */
.objects { height: 477px; flex: none; display: flex; flex-direction: column; border-bottom: 1px solid #4e4e4e; }
.panel-menu { display: flex; align-items: center; gap: 10px; padding-left: 6px; flex: none; }
.om-menu { height: 26px; }
.disc-row {
  height: 15px;
  flex: none;
  background: #464646;
  display: flex;
  align-items: center;
  padding-left: 16px;
}
.disc-icon { width: 13px; height: 13px; }
.disc-name { color: #d6a73c; margin-left: 1px; width: 24px; }
.disc-box { width: 10px; height: 10px; margin-left: 3px; background: #777; }
.disc-dots {
  width: 3px;
  height: 9px;
  margin-left: 3px;
  border-top: 3px solid #aaa;
  border-bottom: 3px solid #aaa;
}
.disc-tag { width: 11px; height: 11px; margin-left: 9px; }
.disc-tag + .disc-tag { margin-left: 4px; }
.om-cols { flex: 1; padding-left: 83px; }
.om-col { height: 100%; border-left: 1px solid #474747; }

/* attribute manager */
.attrs { flex: 1; min-height: 0; overflow: hidden; display: flex; flex-direction: column; }
.am-menu { height: 23px; flex: none; gap: 11px; }
.move-row {
  height: 20px;
  flex: none;
  display: flex;
  align-items: center;
  padding-left: 6px;
  gap: 6px;
}
.move-icon { width: 11px; height: 11px; }
.tabs {
  height: 17px;
  margin-left: 4px;
  margin-top: 1px;
  flex: none;
  display: flex;
  align-items: stretch;
  line-height: 17px;
}
.tab { background: #5c5c5c; color: #aeaeae; padding-left: 3px; }
.t1 { width: 85px; }
.t2 { width: 70px; }
.tab-on {
  width: 78px;
  background: #7eaee6;
  color: #1e3450;
}
.section-title {
  height: 23px;
  flex: none;
  line-height: 26px;
  padding-left: 5px;
  font-weight: 700;
  color: #c6c6c6;
}
.row {
  display: flex;
  align-items: center;
  padding-left: 22px;
  flex: none;
}
.r-enable { height: 17px; }
.r-surface { height: 18px; }
.r-falloff { height: 19px; position: relative; background: #3c3c3b; }
.lbl { color: #a0a0a0; flex: none; }
.l-enable { width: 40px; }
.l-preview { margin-left: 30px; width: 42px; }
.l-restrict { margin-left: 30px; width: 42px; }
.cb {
  width: 10px;
  height: 10px;
  flex: none;
  border: 1px solid #707070;
  border-radius: 1px;
  position: relative;
}
.cb.on { background: #c9c9c9; border-color: #c9c9c9; }
.cb.on::after {
  content: "";
  position: absolute;
  left: 2.500px;
  top: 0;
  width: 3px;
  height: 6px;
  border-right: 1.500px solid #222;
  border-bottom: 1.500px solid #222;
  transform: rotate(40deg);
}
.l-falloff { width: 35px; color: #dd9a3e; }
.dd {
  height: 16px;
  background: #535353;
  color: #b5b5b5;
  line-height: 16px;
  padding-left: 5px;
  position: relative;
  flex: none;
}
.dd-falloff { width: 81px; }
.l-mode { margin-left: 20px; width: 34px; }
.dd-mode { width: 56px; }
.redbox {
  position: absolute;
  left: 6px;
  top: -5px;
  width: 144px;
  height: 26px;
  border: 3px solid #f8261a;
  border-radius: 2px;
}
.slider-row {
  height: 19px;
  flex: none;
  display: flex;
  align-items: center;
  padding-left: 22px;
}
.l-num { width: 48px; }
.num {
  width: 68px;
  height: 16px;
  flex: none;
  padding-left: 3px;
  background: #343434;
  line-height: 16px;
  color: #bdbdbd;
  position: relative;
}
.track { flex: 1; height: 16px; background: #2e2e2e; display: block; }
.fill { display: block; height: 100%; background: #6c6c6c; }
.fill-radius { width: 35px; border-right: 2px solid #8fb5e0; }
.fill-strength { width: 100%; }
.fill-width { width: 178px; background: #4e4e4e; border-right: 2px solid #707070; }
.dimmed .lbl, .dimmed .num { color: #626262; }
.dimmed .num { background: #3a3a3a; }
.dimmed .track { background: #3f3f3f; }
.graph { width: 375px; height: 130px; flex: none; margin-top: 2px; }
.graph-labels text { font: 11px Roboto, sans-serif; fill: #8d8d8d; }
```
